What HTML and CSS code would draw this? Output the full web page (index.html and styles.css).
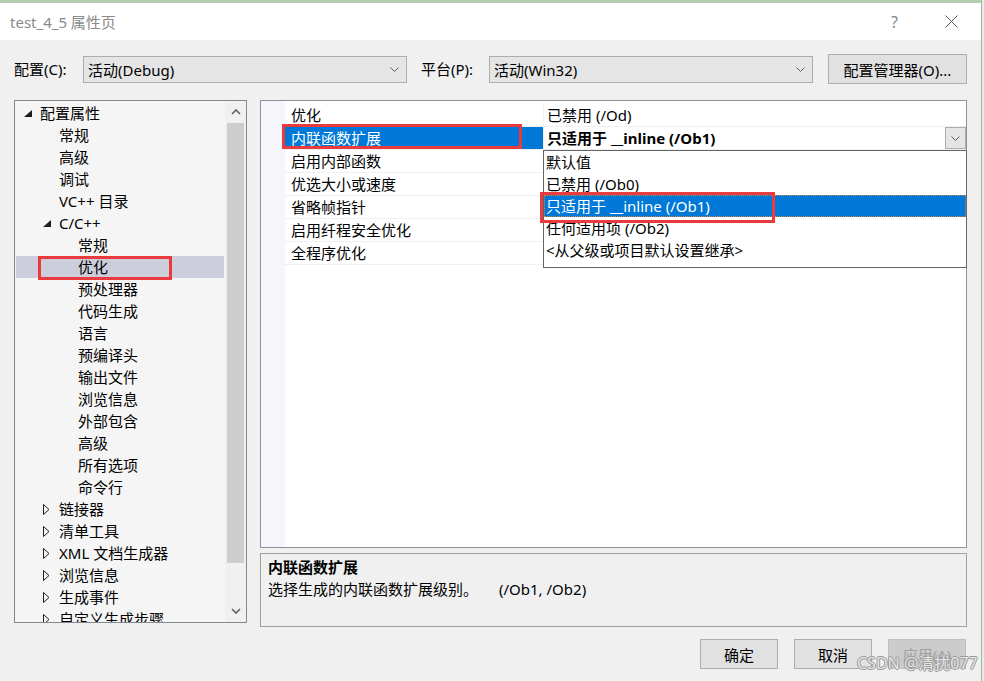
FILE: index.html
```html
<!DOCTYPE html>
<html>
  <head>
    <meta charset="utf-8">
    <title>test_4_5 属性页</title>
    <link rel="stylesheet" href="styles.css">
  </head>
  <body>
    <div class="window">
      <div class="titlebar">
        <span class="title">test_4_5 属性页</span>
        <span class="help">?</span>
        <svg class="close" width="13" height="13" viewBox="0 0 13 13"><path d="M0.5 0.5L12.5 12.5M12.5 0.5L0.5 12.5" stroke="#555" stroke-width="1"/></svg>
      </div>

      <div class="configbar">
        <span class="lbl lbl-config">配置(C):</span>
        <div class="combo">
          <span>活动(Debug)</span>
          <svg width="9" height="5" viewBox="0 0 9 5"><path d="M0.5 0.5L4.5 4.5L8.5 0.5" fill="none" stroke="#606060"/></svg>
        </div>
        <span class="lbl lbl-platform">平台(P):</span>
        <div class="combo">
          <span>活动(Win32)</span>
          <svg width="9" height="5" viewBox="0 0 9 5"><path d="M0.5 0.5L4.5 4.5L8.5 0.5" fill="none" stroke="#606060"/></svg>
        </div>
        <button class="btn btn-manager">配置管理器(O)...</button>
      </div>

      <div class="main">
        <div class="tree">
          <ul class="tree-list">
            <li class="lv0"><span class="exp"><svg width="8" height="7" viewBox="0 0 8 7"><path d="M8 0V7H0Z" fill="#1e1e1e"/></svg></span>配置属性</li>
            <li class="lv1"><span class="exp"></span>常规</li>
            <li class="lv1"><span class="exp"></span>高级</li>
            <li class="lv1"><span class="exp"></span>调试</li>
            <li class="lv1"><span class="exp"></span>VC++ 目录</li>
            <li class="lv1"><span class="exp"><svg width="8" height="7" viewBox="0 0 8 7"><path d="M8 0V7H0Z" fill="#1e1e1e"/></svg></span>C/C++</li>
            <li class="lv2"><span class="exp"></span>常规</li>
            <li class="lv2 selected"><span class="exp"></span>优化</li>
            <li class="lv2"><span class="exp"></span>预处理器</li>
            <li class="lv2"><span class="exp"></span>代码生成</li>
            <li class="lv2"><span class="exp"></span>语言</li>
            <li class="lv2"><span class="exp"></span>预编译头</li>
            <li class="lv2"><span class="exp"></span>输出文件</li>
            <li class="lv2"><span class="exp"></span>浏览信息</li>
            <li class="lv2"><span class="exp"></span>外部包含</li>
            <li class="lv2"><span class="exp"></span>高级</li>
            <li class="lv2"><span class="exp"></span>所有选项</li>
            <li class="lv2"><span class="exp"></span>命令行</li>
            <li class="lv1"><span class="exp"><svg width="7" height="11" viewBox="0 0 7 11"><path d="M0.5 0.5L6 5.5L0.5 10.5Z" fill="none" stroke="#1e1e1e"/></svg></span>链接器</li>
            <li class="lv1"><span class="exp"><svg width="7" height="11" viewBox="0 0 7 11"><path d="M0.5 0.5L6 5.5L0.5 10.5Z" fill="none" stroke="#1e1e1e"/></svg></span>清单工具</li>
            <li class="lv1"><span class="exp"><svg width="7" height="11" viewBox="0 0 7 11"><path d="M0.5 0.5L6 5.5L0.5 10.5Z" fill="none" stroke="#1e1e1e"/></svg></span>XML 文档生成器</li>
            <li class="lv1"><span class="exp"><svg width="7" height="11" viewBox="0 0 7 11"><path d="M0.5 0.5L6 5.5L0.5 10.5Z" fill="none" stroke="#1e1e1e"/></svg></span>浏览信息</li>
            <li class="lv1"><span class="exp"><svg width="7" height="11" viewBox="0 0 7 11"><path d="M0.5 0.5L6 5.5L0.5 10.5Z" fill="none" stroke="#1e1e1e"/></svg></span>生成事件</li>
            <li class="lv1"><span class="exp"><svg width="7" height="11" viewBox="0 0 7 11"><path d="M0.5 0.5L6 5.5L0.5 10.5Z" fill="none" stroke="#1e1e1e"/></svg></span>自定义生成步骤</li>
          </ul>
          <div class="vscroll">
            <div class="sb-btn"><svg width="10" height="6" viewBox="0 0 10 6"><path d="M1 5L5 1L9 5" fill="none" stroke="#606060" stroke-width="1.6"/></svg></div>
            <div class="sb-thumb"></div>
            <div class="sb-track"></div>
            <div class="sb-btn"><svg width="10" height="6" viewBox="0 0 10 6"><path d="M1 1L5 5L9 1" fill="none" stroke="#606060" stroke-width="1.6"/></svg></div>
          </div>
          <div class="mark mark-tree"></div>
        </div>

        <div class="right">
          <div class="grid">
            <div class="gutter"></div>
            <div class="props">
              <div class="prop"><div class="name">优化</div><div class="value">已禁用 (/Od)</div></div>
              <div class="prop active"><div class="name">内联函数扩展</div><div class="value"><b>只适用于 __inline (/Ob1)</b><span class="drop-btn"><svg width="9" height="5" viewBox="0 0 9 5"><path d="M0.5 0.5L4.5 4.5L8.5 0.5" fill="none" stroke="#606060"/></svg></span></div></div>
              <div class="prop"><div class="name">启用内部函数</div><div class="value"></div></div>
              <div class="prop"><div class="name">优选大小或速度</div><div class="value"></div></div>
              <div class="prop"><div class="name">省略帧指针</div><div class="value"></div></div>
              <div class="prop"><div class="name">启用纤程安全优化</div><div class="value"></div></div>
              <div class="prop"><div class="name">全程序优化</div><div class="value"></div></div>
            </div>
            <ul class="popup">
              <li>默认值</li>
              <li>已禁用 (/Ob0)</li>
              <li class="hl">只适用于 __inline (/Ob1)</li>
              <li>任何适用项 (/Ob2)</li>
              <li>&lt;从父级或项目默认设置继承&gt;</li>
              <div class="mark mark-popup"></div>
            </ul>
            <div class="mark mark-grid"></div>
          </div>
          <div class="desc">
            <div class="desc-title">内联函数扩展</div>
            <div class="desc-text">选择生成的内联函数扩展级别。<span class="switches">(/Ob1, /Ob2)</span></div>
          </div>
        </div>
      </div>

      <div class="actions">
        <button class="btn">确定</button>
        <button class="btn">取消</button>
        <button class="btn disabled">应用(A)</button>
      </div>

      <div class="watermark">CSDN @清扰077</div>
    </div>
  </body>
</html>
```

FILE: styles.css
```css
* { box-sizing: border-box; }
body { margin: 0; background: #e6ece5; font-family: "Noto Sans", "Noto Sans CJK SC", sans-serif; font-size: 15px; color: #000; }

.window { position: relative; width: 982px; height: 681px; background: #f0f0f0; border-top: 3px solid #b4ccaf; border-right: 1px solid #9fb89b; overflow: hidden; }

/* title bar */
.titlebar { display: flex; align-items: center; height: 37px; background: #fff; padding: 0 23px 0 10px; }
.title { color: #8a8a8a; line-height: 20px; }
.help { margin-left: auto; margin-right: 47px; color: #8a8a8a; font-size: 16px; }
.close { display: block; }

/* config row */
.configbar { display: flex; align-items: flex-start; height: 60px; padding: 14px 0 0 14px; }
.lbl { line-height: 30px; height: 30px; }
.lbl-config { width: 69px; }
.lbl-platform { width: 68px; margin-left: 14px; }
.combo { display: flex; align-items: center; justify-content: space-between; width: 324px; height: 27px; margin-top: 2px; padding: 0 7px 0 4px; background: #e5e5e5; border: 1px solid #adadad; line-height: 20px; }
.combo svg { display: block; }

.btn { font-family: inherit; font-size: 15px; color: #000; background: #e1e1e1; border: 1px solid #adadad; height: 30px; padding: 0; }
.btn-manager { width: 139px; margin-left: 15px; }

/* main */
.main { display: flex; align-items: flex-start; gap: 13px; height: 527px; padding-left: 14px; }

.tree { position: relative; display: flex; width: 233px; height: 523px; border: 1px solid #828790; background: #f5f5f5; }
.tree-list { flex: 1; list-style: none; margin: 0; padding: 1px 1px 0; overflow: hidden; }
.tree-list li { display: flex; align-items: center; height: 22px; line-height: 22px; white-space: nowrap; }
.tree-list li.lv0 { padding-left: 8px; }
.tree-list li.lv1 { padding-left: 27px; }
.tree-list li.lv2 { padding-left: 46px; }
.tree-list li.selected { background: #cccedb; }
.exp { display: flex; align-items: center; width: 16px; height: 22px; }
.exp svg { display: block; }

.vscroll { display: flex; flex-direction: column; width: 21px; background: #f0f0f0; }
.sb-btn { display: flex; align-items: center; justify-content: center; height: 22px; }
.sb-thumb { height: 440px; margin: 0 2px; background: #cdcdcd; }
.sb-track { flex: 1; }

.mark { position: absolute; border: 3px solid #e93b3d; pointer-events: none; }
.mark-tree { left: 23px; top: 155px; width: 134px; height: 24px; }
.mark-grid { left: 21px; top: 23px; width: 240px; height: 25px; }
.mark-popup { left: -4px; top: 41px; width: 235px; height: 31px; }

.right { display: flex; flex-direction: column; gap: 5px; width: 707px; }

/* property grid */
.grid { position: relative; display: flex; height: 448px; border: 1px solid #8e9099; background: #fff; }
.gutter { width: 24px; background: #f4f6fb; }
.props { flex: 1; padding-top: 3px; }
.prop { display: flex; height: 23px; border-bottom: 1px solid #f0f0f0; line-height: 22px; }
.prop .name { width: 259px; padding-left: 6px; border-right: 1px solid #f0f0f0; white-space: nowrap; }
.prop .value { display: flex; flex: 1; align-items: center; justify-content: space-between; padding-left: 3px; white-space: nowrap; }
.prop.active .name { background: #0078d7; color: #fff; }
.prop.active .value b { font-weight: 700; }
.drop-btn { display: flex; align-items: center; justify-content: center; width: 21px; height: 22px; background: #e5e5e5; border: 1px solid #adadad; }

.popup { position: absolute; left: 282px; top: 49px; width: 424px; height: 118px; margin: 0; padding: 0; list-style: none; background: #fff; border: 1px solid #646464; }
.popup li { height: 22px; line-height: 22px; padding-left: 2px; white-space: nowrap; }
.popup li.hl { background: #0078d7; color: #fff; border: 1px dotted #d08a3c; padding-left: 1px; line-height: 20px; }

/* description */
.desc { height: 74px; border: 1px solid #a0a0a0; padding: 2px 7px 0; }
.desc-title { font-weight: 700; line-height: 22px; }
.desc-text { line-height: 23px; }
.switches { margin-left: 21px; }

/* buttons */
.actions { display: flex; justify-content: flex-end; gap: 16px; margin-top: 12px; padding-right: 15px; }
.actions .btn { width: 78px; }
.btn.disabled { background: #cccccc; border-color: #bfbfbf; color: #a0a0a0; }

.watermark { position: absolute; left: 857px; top: 649px; font-size: 16px; line-height: 22px; color: rgba(255, 255, 255, 0.75); text-shadow: 1px 0 #9a9a9a, -1px 0 #9a9a9a, 0 1px #9a9a9a, 0 -1px #9a9a9a; white-space: nowrap; }
```
